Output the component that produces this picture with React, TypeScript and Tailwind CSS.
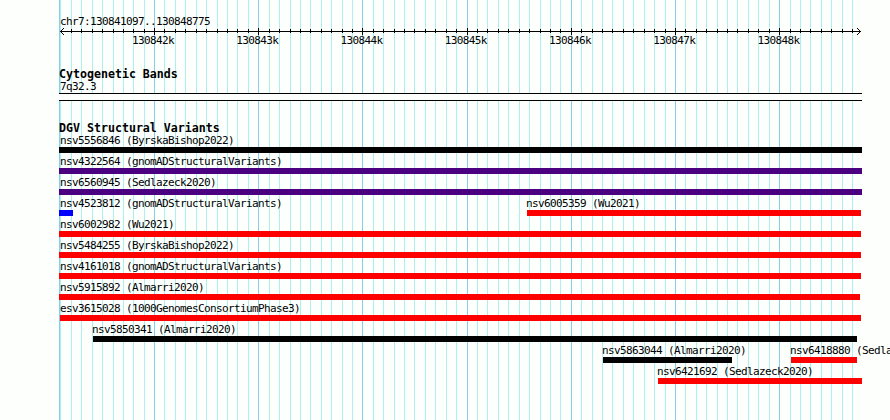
const MINOR = [
  71, 81, 92, 102, 113, 123, 133, 144, 164, 175, 185, 196, 206, 217, 227, 237, 248,
  269, 279, 290, 300, 310, 321, 331, 342, 352, 373, 383, 394, 404, 414, 425, 435, 446, 456,
  477, 487, 498, 508, 519, 529, 540, 550, 560, 581, 592, 602, 612, 623, 633, 644, 654, 665,
  685, 696, 706, 717, 727, 737, 748, 758, 769, 790, 800, 810, 821, 831, 842, 852,
];
const MAJOR = [154, 258, 362, 467, 571, 675, 779];

type Variant = { id: string; source: string; start: number; end: number; color: string; label?: number };

const ROWS: Variant[][] = [
  [{ id: "nsv5556846", source: "ByrskaBishop2022", start: 59, end: 862, color: "bg-black" }],
  [{ id: "nsv4322564", source: "gnomADStructuralVariants", start: 59, end: 862, color: "bg-[#4b0082]" }],
  [{ id: "nsv6560945", source: "Sedlazeck2020", start: 59, end: 862, color: "bg-[#4b0082]" }],
  [
    { id: "nsv4523812", source: "gnomADStructuralVariants", start: 59, end: 73, color: "bg-[#0000ff]" },
    { id: "nsv6005359", source: "Wu2021", start: 527, end: 861, color: "bg-[#ff0000]", label: 526 },
  ],
  [{ id: "nsv6002982", source: "Wu2021", start: 59, end: 861, color: "bg-[#ff0000]" }],
  [{ id: "nsv5484255", source: "ByrskaBishop2022", start: 59, end: 861, color: "bg-[#ff0000]" }],
  [{ id: "nsv4161018", source: "gnomADStructuralVariants", start: 59, end: 861, color: "bg-[#ff0000]" }],
  [{ id: "nsv5915892", source: "Almarri2020", start: 59, end: 860, color: "bg-[#ff0000]" }],
  [{ id: "esv3615028", source: "1000GenomesConsortiumPhase3", start: 60, end: 861, color: "bg-[#ff0000]" }],
  [{ id: "nsv5850341", source: "Almarri2020", start: 93, end: 857, color: "bg-black", label: 92 }],
  [
    { id: "nsv5863044", source: "Almarri2020", start: 603, end: 732, color: "bg-black", label: 602 },
    { id: "nsv6418880", source: "Sedlazeck2020", start: 791, end: 857, color: "bg-[#ff0000]", label: 790 },
  ],
  [{ id: "nsv6421692", source: "Sedlazeck2020", start: 658, end: 862, color: "bg-[#ff0000]", label: 657 }],
];

const SMALL = "block whitespace-pre text-[11px] tracking-[-0.622px] leading-[13px]";
const BOLD = "block whitespace-pre pl-[59px] text-[11.628px] font-bold leading-[13px]";

function Backdrop() {
  return (
    <svg className="absolute inset-0" width="890" height="420" shapeRendering="crispEdges">
      <rect x="59" width="1" height="420" fill="#87ceeb" />
      <rect x="60" width="1" height="420" fill="#afeeee" />
      {MINOR.map((x) => <rect key={x} x={x} width="1" height="420" fill="#afeeee" />)}
      {MAJOR.map((x) => <rect key={x} x={x} width="1" height="420" fill="#87ceeb" />)}
    </svg>
  );
}

function Ruler() {
  return (
    <svg className="block" width="890" height="8" shapeRendering="crispEdges">
      <rect x="60" y="3" width="801" height="1" />
      {MINOR.map((x) => <rect key={x} x={x} y="1" width="1" height="4" />)}
      {MAJOR.map((x) => <rect key={x} x={x} y="0" width="1" height="7" />)}
      {[1, 2, 3].map((n) => (
        <g key={n}>
          <rect x={60 + n} y={3 - n} width="1" height="1" />
          <rect x={60 + n} y={3 + n} width="1" height="1" />
          <rect x={860 - n} y={3 - n} width="1" height="1" />
          <rect x={860 - n} y={3 + n} width="1" height="1" />
        </g>
      ))}
    </svg>
  );
}

function VariantRow({ items }: { items: Variant[] }) {
  return (
    <div className="grid h-[21px] w-[890px]">
      {items.map((v) => (
        <div key={v.id} className="col-start-1 row-start-1">
          <span className={SMALL} style={{ paddingLeft: v.label ?? 60 }}>{`${v.id} (${v.source})`}</span>
          <div className={`h-[6px] ${v.color}`} style={{ marginLeft: v.start, width: v.end - v.start }} />
        </div>
      ))}
    </div>
  );
}

export default function App() {
  return (
    <div className="relative h-[420px] w-[890px] overflow-hidden bg-[#fdfffc] font-['DejaVu_Sans_Mono',monospace] text-black">
      <Backdrop />
      <main className="relative flex flex-col pt-[15px]">
        <span className={`${SMALL} pl-[60px]`}>chr7:130841097..130848775</span>
        <Ruler />
        <div className="-mt-[2px] flex pl-[132px]">
          {MAJOR.map((x, i) => (
            <span key={x} className={`${SMALL} w-[104.25px]`}>{`${130842 + i}k`}</span>
          ))}
        </div>
        <div className="h-[21px]" />
        <h2 className={BOLD}>Cytogenetic Bands</h2>
        <span className={`${SMALL} -mt-px pl-[60px]`}>7q32.3</span>
        <div className="ml-[59px] h-[8px] w-[803px] border-y border-black bg-[#fdfffc]" />
        <div className="h-[21px]" />
        <h2 className={BOLD}>DGV Structural Variants</h2>
        <div className="-mt-px">
          {ROWS.map((items) => <VariantRow key={items[0].id} items={items} />)}
        </div>
      </main>
    </div>
  );
}
